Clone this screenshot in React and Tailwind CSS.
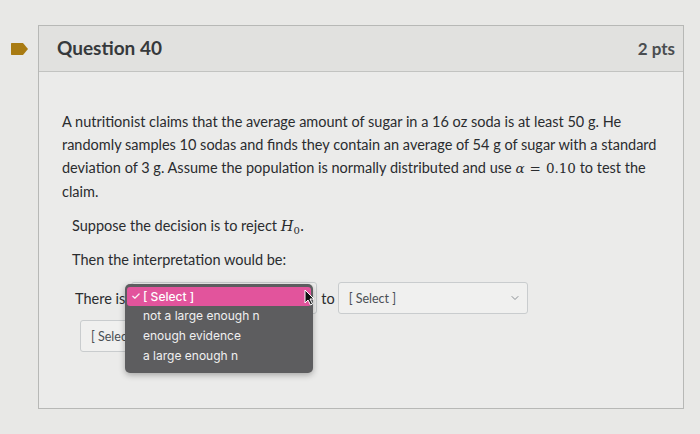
import { ChevronDown } from 'lucide-react'

function SelectBox({ className = '', label = '[ Select ]' }) {
  return (
    <div className={`flex h-[32px] items-center justify-between rounded-[3px] border border-[#c9ccce] bg-[#f0f0ef] pl-[10px] pr-[6px] text-[12.5px] text-[#4a4f54] ${className}`}>
      <span>{label}</span>
      <ChevronDown size={12} strokeWidth={2} className="text-[#8a8f94]" />
    </div>
  )
}

function Cursor() {
  return (
    <svg width="11" height="17" viewBox="0 0 11 17" className="absolute left-[304px] top-[289px]">
      <path d="M1 1 L1 14 L4 11 L6.5 16 L8.5 15 L6 10 L10 10 Z" fill="#111" stroke="#fff" strokeWidth="1" />
    </svg>
  )
}

export default function App() {
  const math = { fontFamily: '"DejaVu Serif", "Liberation Serif", serif' }

  return (
    <div className="relative h-[434px] w-[700px] overflow-hidden bg-[#e8e8e6] font-['Lato',sans-serif] text-[#2a2c2f]">
      <div className="flex pt-[25px]">
        <div className="w-[38px] pl-[10px] pt-[17px]">
          <svg width="19" height="14" viewBox="0 0 19 14">
            <path d="M1.5 1 L13 1 L18 7 L13 13 L1.5 13 Q1 13 1 12 L1 2 Q1 1 1.5 1 Z" fill="#a97b12" />
          </svg>
        </div>

        <div className="h-[384px] w-[646px] border border-[#b7b8b6] bg-[#ebebea]">
          <div className="flex h-[46px] items-center justify-between border-b border-[#c2c3c1] bg-[#e1e1df] pl-[18px] pr-[8px]">
            <h2 className="text-[19px] font-bold text-[#36393c]">Question 40</h2>
            <span className="text-[17px] font-bold text-[#4a4d50]">2 pts</span>
          </div>

          <div className="pl-[23px] pr-[26px] pt-[38px] text-[14.5px] leading-[23px]">
            <p>
              A nutritionist claims that the average amount of sugar in a 16 oz soda is at least 50 g. He
              randomly samples 10 sodas and finds they contain an average of 54 g of sugar with a standard
              deviation of 3 g. Assume the population is normally distributed and use{' '}
              <span style={math} className="text-[13.5px] italic">α</span>
              <span style={math} className="mx-[5px] text-[13.5px]">=</span>
              <span style={math} className="text-[13.5px]">0.10</span> to test the claim.
            </p>

            <p className="mt-[11px] pl-[10px]">
              Suppose the decision is to reject{' '}
              <span style={math} className="italic">H</span>
              <sub style={math} className="text-[10px]">0</sub>
              <span style={math}>.</span>
            </p>

            <p className="mt-[10px] pl-[10px]">Then the interpretation would be:</p>

            <div className="mt-[11px] flex items-center pl-[13px]">
              <span>There is</span>
              <SelectBox className="ml-[6px] w-[186px]" />
              <span className="ml-[4px]">to</span>
              <SelectBox className="ml-[3px] w-[190px]" />
            </div>

            <div className="mt-[6px] pl-[18px]">
              <SelectBox className="w-[160px]" label="[ Select ]" />
            </div>
          </div>
        </div>
      </div>

      <div className="absolute left-[125px] top-[284px] w-[188px] rounded-[5px] bg-[#5d5d5f] px-[2px] pb-[7px] pt-[3px] font-['Inter',sans-serif] text-[12px] text-[#f0f0f0] shadow-[0_2px_6px_rgba(0,0,0,0.3)]">
        <div className="flex h-[19px] items-center rounded-[3px] bg-[#e2549c] pl-[4px] font-medium text-white">
          <span className="w-[12px] text-[11px]">✓</span>
          <span>[ Select ]</span>
        </div>
        <div className="flex h-[20px] items-center pl-[16px]">not a large enough n</div>
        <div className="flex h-[20px] items-center pl-[16px]">enough evidence</div>
        <div className="flex h-[20px] items-center pl-[16px]">a large enough n</div>
      </div>

      <Cursor />
    </div>
  )
}
